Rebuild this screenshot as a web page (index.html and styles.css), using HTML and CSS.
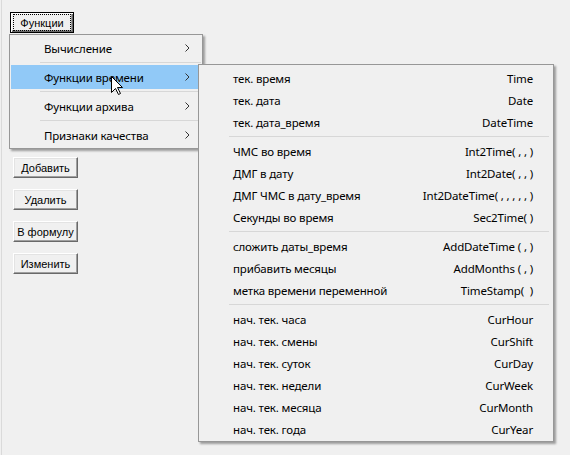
FILE: index.html
```html
<!DOCTYPE html>
<html lang="ru">
<head>
<meta charset="utf-8">
<title>Функции</title>
<link rel="stylesheet" href="styles.css">
</head>
<body>
<div class="window">
  <div class="left">
    <button class="btn btn-main"><span class="focus">Функции</span></button>
    <div class="actions">
      <button class="btn">Добавить</button>
      <button class="btn">Удалить</button>
      <button class="btn">В формулу</button>
      <button class="btn">Изменить</button>
    </div>
  </div>

  <div class="menu menu-main">
    <div class="mitem"><span>Вычисление</span><svg class="chev" width="5" height="8" viewBox="0 0 5 8"><path d="M0.5 0.5 L4 4 L0.5 7.5" fill="none" stroke="#333" stroke-width="1"/></svg></div>
    <div class="msep"></div>
    <div class="mitem active"><span>Функции времени</span><svg class="chev" width="5" height="8" viewBox="0 0 5 8"><path d="M0.5 0.5 L4 4 L0.5 7.5" fill="none" stroke="#333" stroke-width="1"/></svg></div>
    <div class="msep"></div>
    <div class="mitem"><span>Функции архива</span><svg class="chev" width="5" height="8" viewBox="0 0 5 8"><path d="M0.5 0.5 L4 4 L0.5 7.5" fill="none" stroke="#333" stroke-width="1"/></svg></div>
    <div class="msep"></div>
    <div class="mitem"><span>Признаки качества</span><svg class="chev" width="5" height="8" viewBox="0 0 5 8"><path d="M0.5 0.5 L4 4 L0.5 7.5" fill="none" stroke="#333" stroke-width="1"/></svg></div>
  </div>

  <div class="menu menu-sub">
    <div class="sitem"><span>тек. время</span><span>Time</span></div>
    <div class="sitem"><span>тек. дата</span><span>Date</span></div>
    <div class="sitem"><span>тек. дата_время</span><span>DateTime</span></div>
    <div class="ssep"></div>
    <div class="sitem"><span>ЧМС во время</span><span>Int2Time( , , )</span></div>
    <div class="sitem"><span>ДМГ в дату</span><span>Int2Date( , , )</span></div>
    <div class="sitem"><span>ДМГ ЧМС в дату_время</span><span>Int2DateTime( , , , , , )</span></div>
    <div class="sitem"><span>Секунды во время</span><span>Sec2Time( )</span></div>
    <div class="ssep"></div>
    <div class="sitem"><span>сложить даты_время</span><span>AddDateTime ( , )</span></div>
    <div class="sitem"><span>прибавить месяцы</span><span>AddMonths ( , )</span></div>
    <div class="sitem"><span>метка времени переменной</span><span>TimeStamp(  )</span></div>
    <div class="ssep"></div>
    <div class="sitem"><span>нач. тек. часа</span><span>CurHour</span></div>
    <div class="sitem"><span>нач. тек. смены</span><span>CurShift</span></div>
    <div class="sitem"><span>нач. тек. суток</span><span>CurDay</span></div>
    <div class="sitem"><span>нач. тек. недели</span><span>CurWeek</span></div>
    <div class="sitem"><span>нач. тек. месяца</span><span>CurMonth</span></div>
    <div class="sitem"><span>нач. тек. года</span><span>CurYear</span></div>
  </div>

  <svg class="cursor" width="13" height="20" viewBox="0 0 13 20">
    <path d="M0.5 0.5 V16.5 L4.5 12.5 L7.5 18.5 L9.5 17.5 L6.5 11.5 H11.5 Z" fill="#fff" stroke="#000" stroke-width="1" stroke-linejoin="miter"/>
  </svg>
</div>
</body>
</html>
```

FILE: styles.css
```css
* { box-sizing: border-box; }
html, body { margin: 0; padding: 0; }
body {
  background: #f0f0f0;
  width: 570px;
  height: 455px;
  overflow: hidden;
}
.window {
  position: relative;
  width: 570px;
  height: 455px;
  border-left: 1px solid #dadada;
  margin-left: 1px;
}
.left {
  display: flex;
  flex-direction: column;
  align-items: flex-start;
  padding: 12px 0 0 8px;
}
.btn {
  font-family: "Liberation Sans", Arial, sans-serif;
  font-size: 11px;
  color: #000;
  background: #f0f0f0;
  width: 65px;
  height: 21px;
  padding: 0;
  margin: 0;
  border: 1px solid;
  border-color: #fff #696969 #696969 #fff;
  box-shadow: inset -1px -1px 0 #a0a0a0, inset 1px 1px 0 #e3e3e3;
  display: flex;
  align-items: center;
  justify-content: center;
  white-space: nowrap;
}
.btn-main {
  width: 64px;
  border: 1px solid #000;
  box-shadow: inset 1px 1px 0 #fff, inset -1px -1px 0 #696969, inset -2px -2px 0 #a0a0a0;
}
.focus {
  display: flex;
  align-items: center;
  justify-content: center;
  width: 56px;
  height: 15px;
  outline: 1px dotted #000;
}
.actions {
  display: flex;
  flex-direction: column;
  gap: 11px;
  margin-top: 124px;
  margin-left: 3px;
}
.menu {
  position: absolute;
  background: #f0f0f0;
  border: 1px solid #979797;
  box-shadow: 2px 2px 2px rgba(0, 0, 0, 0.35);
  font-family: "Noto Sans", "Open Sans", sans-serif;
  font-size: 11.5px;
  letter-spacing: -0.15px;
  color: #000;
}
.menu-main {
  left: 7px;
  top: 34px;
  width: 194px;
  padding: 1px;
  display: flex;
  flex-direction: column;
}
.mitem {
  height: 24px;
  display: flex;
  align-items: center;
  justify-content: space-between;
  padding: 0 11px 0 33px;
}
.mitem.active { background: #91c9f7; }
.msep {
  height: 5px;
  margin-left: 29px;
  display: flex;
  align-items: center;
}
.msep::before {
  content: "";
  display: block;
  width: 100%;
  height: 1px;
  background: #d7d7d7;
}
.menu-sub {
  left: 196px;
  top: 64px;
  width: 356px;
  padding: 2px 1px 1px 1px;
  display: flex;
  flex-direction: column;
}
.sitem {
  height: 22px;
  display: flex;
  align-items: center;
  justify-content: space-between;
  padding: 0 19px 0 33px;
  white-space: pre;
}
.ssep {
  height: 7px;
  margin: 0 3px 0 29px;
  display: flex;
  align-items: center;
}
.ssep::before {
  content: "";
  display: block;
  width: 100%;
  height: 1px;
  background: #d7d7d7;
}
.cursor {
  position: absolute;
  left: 109px;
  top: 76px;
}
```
